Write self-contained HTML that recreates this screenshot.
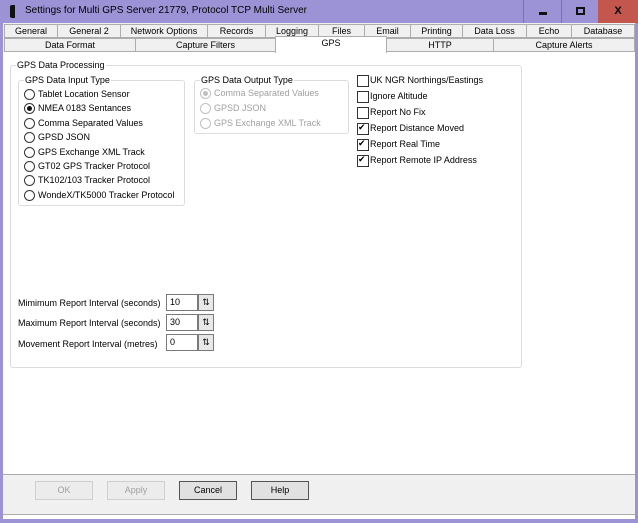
<!DOCTYPE html>
<html><head><style>
*{box-sizing:border-box;margin:0;padding:0}
body{width:638px;height:523px;background:#9b93d6;font-family:"Liberation Sans",sans-serif;font-size:9px;color:#000;position:relative;overflow:hidden}
.a{position:absolute}
.tab{position:absolute;height:14px;border:1px solid #adadad;background:#f0f0f0;text-align:center;line-height:12px;font-size:9px}
.gb{position:absolute;border:1px solid #dcdcdc;border-radius:3px}
.gl{position:absolute;top:-6px;left:5px;background:#fff;padding:0 1px;font-size:9px;line-height:11px}
.r{position:absolute;font-size:9px;line-height:11px;padding-left:14px}
.r:before{content:"";position:absolute;left:0;top:0;width:9px;height:9px;border:1px solid #333;border-radius:50%;background:#fff}
.r.on:after{content:"";position:absolute;left:3px;top:3px;width:5px;height:5px;border-radius:50%;background:#111}
.r.dis{color:#a0a0a0}.r.dis:before{border-color:#c0c0c0}.r.dis.on:after{background:#c0c0c0}
.c{position:absolute;font-size:9px;line-height:11px;padding-left:13px}
.c:before{content:"";position:absolute;left:0;top:0;width:10px;height:10px;border:1px solid #333;background:#fff}
.c.on:after{content:"✔";position:absolute;left:1px;top:0;font-size:9px;line-height:11px;font-family:"DejaVu Sans",sans-serif}
.lab{position:absolute;left:18px;font-size:9px}
.in{position:absolute;left:166px;width:32px;height:17px;border:1px solid #7a7a7a;background:#fff;padding:2px 3px;font-size:9px}
.sp{position:absolute;left:198px;width:16px;height:17px;border:1px solid #7a7a7a;background:#e8e8e8;font-size:9px;text-align:center;line-height:14px}
.btn{position:absolute;top:481px;width:58px;height:19px;border:1px solid #adadad;background:#e1e1e1;text-align:center;line-height:17px;font-size:9px}
</style></head><body>
<div class="a" style="left:10px;top:5px;width:5px;height:13px;background:#111;border-radius:2px 0 0 2px"></div>
<div class="a" style="left:25px;top:4px;font-size:10px;line-height:14px">Settings for Multi GPS Server 21779, Protocol TCP Multi Server</div>
<div class="a" style="left:523px;top:0;width:38px;height:23px;border-left:1px solid #7a72b8"><div class="a" style="left:15px;top:12px;width:8px;height:3px;background:#111"></div></div>
<div class="a" style="left:561px;top:0;width:37px;height:23px;border-left:1px solid #7a72b8"><div class="a" style="left:14px;top:7px;width:9px;height:8px;border:2px solid #111"></div></div>
<div class="a" style="left:598px;top:0;width:40px;height:23px;background:#c4574d;text-align:center;line-height:23px;font-weight:bold;font-size:11px">X</div>
<div class="a" style="left:3px;top:23px;width:632px;height:496px;background:#f0f0f0"></div>
<div class="a" style="left:3px;top:52px;width:632px;height:423px;background:#fff;border-bottom:1px solid #adadad"></div>
<div class="tab" style="left:4px;top:24px;width:54px">General</div>
<div class="tab" style="left:57px;top:24px;width:64px">General 2</div>
<div class="tab" style="left:120px;top:24px;width:88px">Network Options</div>
<div class="tab" style="left:207px;top:24px;width:59px">Records</div>
<div class="tab" style="left:265px;top:24px;width:54px">Logging</div>
<div class="tab" style="left:318px;top:24px;width:47px">Files</div>
<div class="tab" style="left:364px;top:24px;width:47px">Email</div>
<div class="tab" style="left:410px;top:24px;width:53px">Printing</div>
<div class="tab" style="left:462px;top:24px;width:65px">Data Loss</div>
<div class="tab" style="left:526px;top:24px;width:46px">Echo</div>
<div class="tab" style="left:571px;top:24px;width:64px">Database</div>
<div class="tab" style="left:4px;top:38px;width:132px">Data Format</div>
<div class="tab" style="left:135px;top:38px;width:141px">Capture Filters</div>
<div class="tab" style="left:275px;top:36px;width:112px;height:17px;background:#fff;border-bottom:none;line-height:13px">GPS</div>
<div class="tab" style="left:386px;top:38px;width:108px">HTTP</div>
<div class="tab" style="left:493px;top:38px;width:142px">Capture Alerts</div>
<div class="gb" style="left:10px;top:65px;width:512px;height:303px"><div class="gl">GPS Data Processing</div></div>
<div class="gb" style="left:18px;top:80px;width:167px;height:126px"><div class="gl">GPS Data Input Type</div></div>
<div class="r" style="left:24px;top:89px">Tablet Location Sensor</div>
<div class="r on" style="left:24px;top:103px">NMEA 0183 Sentances</div>
<div class="r" style="left:24px;top:118px">Comma Separated Values</div>
<div class="r" style="left:24px;top:132px">GPSD JSON</div>
<div class="r" style="left:24px;top:147px">GPS Exchange XML Track</div>
<div class="r" style="left:24px;top:161px">GT02 GPS Tracker Protocol</div>
<div class="r" style="left:24px;top:175px">TK102/103 Tracker Protocol</div>
<div class="r" style="left:24px;top:190px">WondeX/TK5000 Tracker Protocol</div>
<div class="gb" style="left:194px;top:80px;width:155px;height:54px"><div class="gl">GPS Data Output Type</div></div>
<div class="r dis on" style="left:200px;top:88px">Comma Separated Values</div>
<div class="r dis" style="left:200px;top:103px">GPSD JSON</div>
<div class="r dis" style="left:200px;top:118px">GPS Exchange XML Track</div>
<div class="c" style="left:357px;top:75px">UK NGR Northings/Eastings</div>
<div class="c" style="left:357px;top:91px">Ignore Altitude</div>
<div class="c" style="left:357px;top:107px">Report No Fix</div>
<div class="c on" style="left:357px;top:123px">Report Distance Moved</div>
<div class="c on" style="left:357px;top:139px">Report Real Time</div>
<div class="c on" style="left:357px;top:155px">Report Remote IP Address</div>
<div class="lab" style="top:298px">Mimimum Report Interval (seconds)</div>
<div class="lab" style="top:318px">Maximum Report Interval (seconds)</div>
<div class="lab" style="top:339px">Movement Report Interval (metres)</div>
<div class="in" style="top:294px">10</div><div class="sp" style="top:294px">⇅</div>
<div class="in" style="top:314px">30</div><div class="sp" style="top:314px">⇅</div>
<div class="in" style="top:334px">0</div><div class="sp" style="top:334px">⇅</div>
<div class="btn" style="left:35px;color:#a0a0a0;background:#ececec;border-color:#cfcfcf">OK</div>
<div class="btn" style="left:107px;color:#a0a0a0;background:#ececec;border-color:#cfcfcf">Apply</div>
<div class="btn" style="left:179px;border-color:#555">Cancel</div>
<div class="btn" style="left:251px;border-color:#555">Help</div>
<div class="a" style="left:3px;top:514px;width:632px;height:5px;background:#fff;border-top:1px solid #adadad"></div>
</body></html>
